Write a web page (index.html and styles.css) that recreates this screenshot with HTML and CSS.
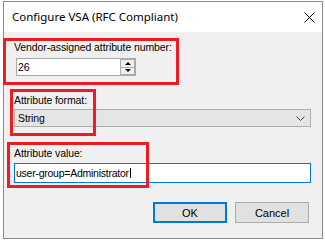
FILE: index.html
```html
<!DOCTYPE html>
<html lang="en">
<head>
  <meta charset="UTF-8" />
  <title>Configure VSA (RFC Compliant)</title>
  <link rel="stylesheet" href="styles.css">
</head>
<body>
  <div class="dialog">
    <div class="titlebar">
      <span class="title">Configure VSA (RFC Compliant)</span>
      <svg class="close" width="11" height="11" viewBox="0 0 11 11">
        <path d="M0.5 0.5 L10.5 10.5 M10.5 0.5 L0.5 10.5" stroke="#000" stroke-width="1" fill="none" />
      </svg>
    </div>
    <div class="content">
      <div class="field-label">Vendor-assigned attribute number:</div>
      <div class="spin">
        <span class="spin-value">26</span>
        <div class="spin-btns">
          <span class="spin-btn"><i class="arrow-up"></i></span>
          <span class="spin-btn"><i class="arrow-down"></i></span>
        </div>
      </div>

      <div class="field-label label-format">Attribute format:</div>
      <div class="select">
        <span>String</span>
        <svg width="9" height="5" viewBox="0 0 9 5">
          <path d="M0.5 0.5 L4.5 4.5 L8.5 0.5" stroke="#444" stroke-width="1" fill="none" />
        </svg>
      </div>

      <div class="field-label label-value">Attribute value:</div>
      <div class="text-input">user-group=Administrator<span class="caret"></span></div>

      <div class="buttons">
        <button class="btn btn-default">OK</button>
        <button class="btn">Cancel</button>
      </div>
    </div>
  </div>

  <!-- highlight marks drawn over the screenshot -->
  <div class="mark mark-number"></div>
  <div class="mark mark-format"></div>
  <div class="mark mark-value"></div>
</body>
</html>
```

FILE: styles.css
```css
* {
  box-sizing: border-box;
}
body {
  margin: 0;
  background: #fff;
  font-family: 'Liberation Sans', Arial, sans-serif;
  font-size: 10.5px;
  letter-spacing: -0.1px;
  color: #000;
}
.dialog {
  margin: 1px 0 0 3px;
  width: 320px;
  height: 238px;
  border: 1px solid #8a8a8a;
  background: #f0f0f0;
  display: flex;
  flex-direction: column;
}
.titlebar {
  height: 30px;
  flex: none;
  background: #fff;
  display: flex;
  align-items: center;
  justify-content: space-between;
  padding: 0 7px 0 8px;
}
.title {
  font-family: 'Noto Sans', sans-serif;
  font-size: 11.5px;
  letter-spacing: 0;
  line-height: 16px;
}
.close {
  display: block;
}
.content {
  padding: 9px 0 0 10px;
}
.field-label {
  line-height: 13px;
  height: 13px;
}
.spin {
  margin: 4px 0 0 2px;
  width: 120px;
  height: 18px;
  background: #fff;
  border: 1px solid #a9a9a9;
  display: flex;
  justify-content: space-between;
}
.spin-value {
  padding-left: 1px;
  line-height: 16px;
}
.spin-btns {
  width: 15px;
  display: flex;
  flex-direction: column;
}
.spin-btn {
  flex: 1;
  border: 1px solid #adadad;
  background: #f0f0f0;
  display: flex;
  align-items: center;
  justify-content: center;
}
.spin-btn + .spin-btn {
  border-top: none;
}
.arrow-up {
  border-left: 3px solid transparent;
  border-right: 3px solid transparent;
  border-bottom: 3px solid #000;
}
.arrow-down {
  border-left: 3px solid transparent;
  border-right: 3px solid transparent;
  border-top: 3px solid #000;
}
.label-format {
  margin-top: 18px;
}
.select {
  margin-top: 2px;
  width: 297px;
  height: 18px;
  background: #e5e5e5;
  border: 1px solid #adadad;
  display: flex;
  align-items: center;
  justify-content: space-between;
  padding: 0 5px 0 3px;
}
.select svg {
  display: block;
}
.label-value {
  margin-top: 20px;
}
.text-input {
  margin-top: 3px;
  width: 297px;
  height: 20px;
  background: #fff;
  border: 1px solid #0078d7;
  line-height: 18px;
  letter-spacing: -0.25px;
  padding-left: 1px;
  display: flex;
  align-items: center;
}
.caret {
  width: 1px;
  height: 10px;
  margin-left: 1px;
  background: #000;
}
.buttons {
  margin-top: 19px;
  width: 295px;
  display: flex;
  justify-content: flex-end;
  gap: 8px;
}
.btn {
  width: 74px;
  height: 21px;
  padding: 0;
  font-family: 'Liberation Sans', Arial, sans-serif;
  font-size: 11px;
  color: #000;
  background: #e1e1e1;
  border: 1px solid #adadad;
}
.btn-default {
  border: 2px solid #0078d7;
}
.mark {
  position: absolute;
  border: 3px solid #ec1c24;
}
.mark-number {
  left: 3px;
  top: 38px;
  width: 176px;
  height: 47px;
}
.mark-format {
  left: 10px;
  top: 89px;
  width: 86px;
  height: 47px;
}
.mark-value {
  left: 7px;
  top: 142px;
  width: 142px;
  height: 46px;
}
```
